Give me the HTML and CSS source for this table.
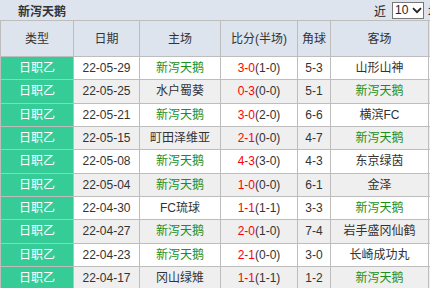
FILE: index.html
```html
<!DOCTYPE html>
<html>
<head>
<meta charset="utf-8">
<link rel="stylesheet" href="styles.css">
</head>
<body>
<div class="page">
  <div class="titlebar">
    <span class="title">新泻天鹅</span>
    <div class="filter">
      <span class="near">近</span>
      <div class="sel"><span>10</span><svg width="10" height="7" viewBox="0 0 10 7"><path d="M1 1.2 L5 5.2 L9 1.2" fill="none" stroke="#222" stroke-width="1.8"/></svg></div>
      <span class="after">场</span>
    </div>
  </div>
  <table class="tbl">
    <colgroup>
      <col class="c1"><col class="c2"><col class="c3"><col class="c4"><col class="c5"><col class="c6"><col class="c7">
    </colgroup>
    <thead>
      <tr><th>类型</th><th>日期</th><th>主场</th><th>比分(半场)</th><th>角球</th><th>客场</th><th></th></tr>
    </thead>
    <tbody>
      <tr><td class="lg">日职乙</td><td>22-05-29</td><td class="win">新泻天鹅</td><td><b>3-0</b>(1-0)</td><td>5-3</td><td>山形山神</td><td></td></tr>
      <tr class="alt"><td class="lg">日职乙</td><td>22-05-25</td><td>水户蜀葵</td><td><b>0-3</b>(0-0)</td><td>5-1</td><td class="win">新泻天鹅</td><td></td></tr>
      <tr><td class="lg">日职乙</td><td>22-05-21</td><td class="win">新泻天鹅</td><td><b>3-0</b>(2-0)</td><td>6-6</td><td>横滨FC</td><td></td></tr>
      <tr class="alt"><td class="lg">日职乙</td><td>22-05-15</td><td>町田泽维亚</td><td><b>2-1</b>(0-0)</td><td>4-7</td><td class="win">新泻天鹅</td><td></td></tr>
      <tr><td class="lg">日职乙</td><td>22-05-08</td><td class="win">新泻天鹅</td><td><b>4-3</b>(3-0)</td><td>4-3</td><td>东京绿茵</td><td></td></tr>
      <tr class="alt"><td class="lg">日职乙</td><td>22-05-04</td><td class="win">新泻天鹅</td><td><b>1-0</b>(0-0)</td><td>6-1</td><td>金泽</td><td></td></tr>
      <tr><td class="lg">日职乙</td><td>22-04-30</td><td>FC琉球</td><td><b>1-1</b>(1-1)</td><td>3-3</td><td class="win">新泻天鹅</td><td></td></tr>
      <tr class="alt"><td class="lg">日职乙</td><td>22-04-27</td><td class="win">新泻天鹅</td><td><b>2-0</b>(1-0)</td><td>7-4</td><td>岩手盛冈仙鹤</td><td></td></tr>
      <tr><td class="lg">日职乙</td><td>22-04-23</td><td class="win">新泻天鹅</td><td><b>2-1</b>(0-0)</td><td>3-0</td><td>长崎成功丸</td><td></td></tr>
      <tr class="alt"><td class="lg">日职乙</td><td>22-04-17</td><td>冈山绿雉</td><td><b>1-1</b>(1-1)</td><td>1-2</td><td class="win">新泻天鹅</td><td></td></tr>
    </tbody>
  </table>
</div>
</body>
</html>
```

FILE: styles.css
```css
html, body {
  margin: 0;
  padding: 0;
  background: #ffffff;
}
.page {
  width: 430px;
  height: 288px;
  overflow: hidden;
  font-family: "Liberation Sans", "Noto Sans CJK SC", sans-serif;
  font-size: 12px;
  color: #333333;
}
.titlebar {
  height: 20px;
  background: #dde4ee;
  display: flex;
  align-items: center;
  justify-content: space-between;
  padding-left: 18px;
  white-space: nowrap;
}
.title {
  font-weight: bold;
  color: #333333;
  font-size: 12px;
}
.filter {
  display: flex;
  align-items: center;
  margin-right: -10px;
}
.near {
  color: #222222;
  margin-right: 6px;
}
.sel {
  width: 27px;
  height: 15px;
  border: 1px solid #777777;
  background: #ffffff;
  display: flex;
  align-items: center;
  justify-content: space-between;
  padding: 0 1px 0 2px;
  box-sizing: content-box;
  color: #222222;
  font-size: 12px;
  margin-right: 4px;
}
.sel span {
  line-height: 15px;
}
.after {
  color: #222222;
}
.tbl {
  border-collapse: collapse;
  table-layout: fixed;
  width: 440px;
}
.c1 { width: 73px; }
.c2 { width: 66px; }
.c3 { width: 81px; }
.c4 { width: 77px; }
.c5 { width: 33px; }
.c6 { width: 98px; }
.c7 { width: 12px; }
.tbl th, .tbl td {
  border: 1px solid #bdbdbd;
  text-align: center;
  padding: 0;
  white-space: nowrap;
  overflow: hidden;
  line-height: 14px;
}
.tbl th {
  height: 35px;
  background: #dde4ee;
  font-weight: normal;
  color: #333333;
}
.tbl td {
  height: 22.33px;
  background: #ffffff;
}
.tbl tr.alt td {
  background: #efefef;
}
.tbl td.lg, .tbl tr.alt td.lg {
  background: #35cc98;
  color: #ffffff;
}
.tbl td.win {
  color: #1a8f1a;
}
.tbl td b {
  font-weight: normal;
  color: #ff0000;
}
```
